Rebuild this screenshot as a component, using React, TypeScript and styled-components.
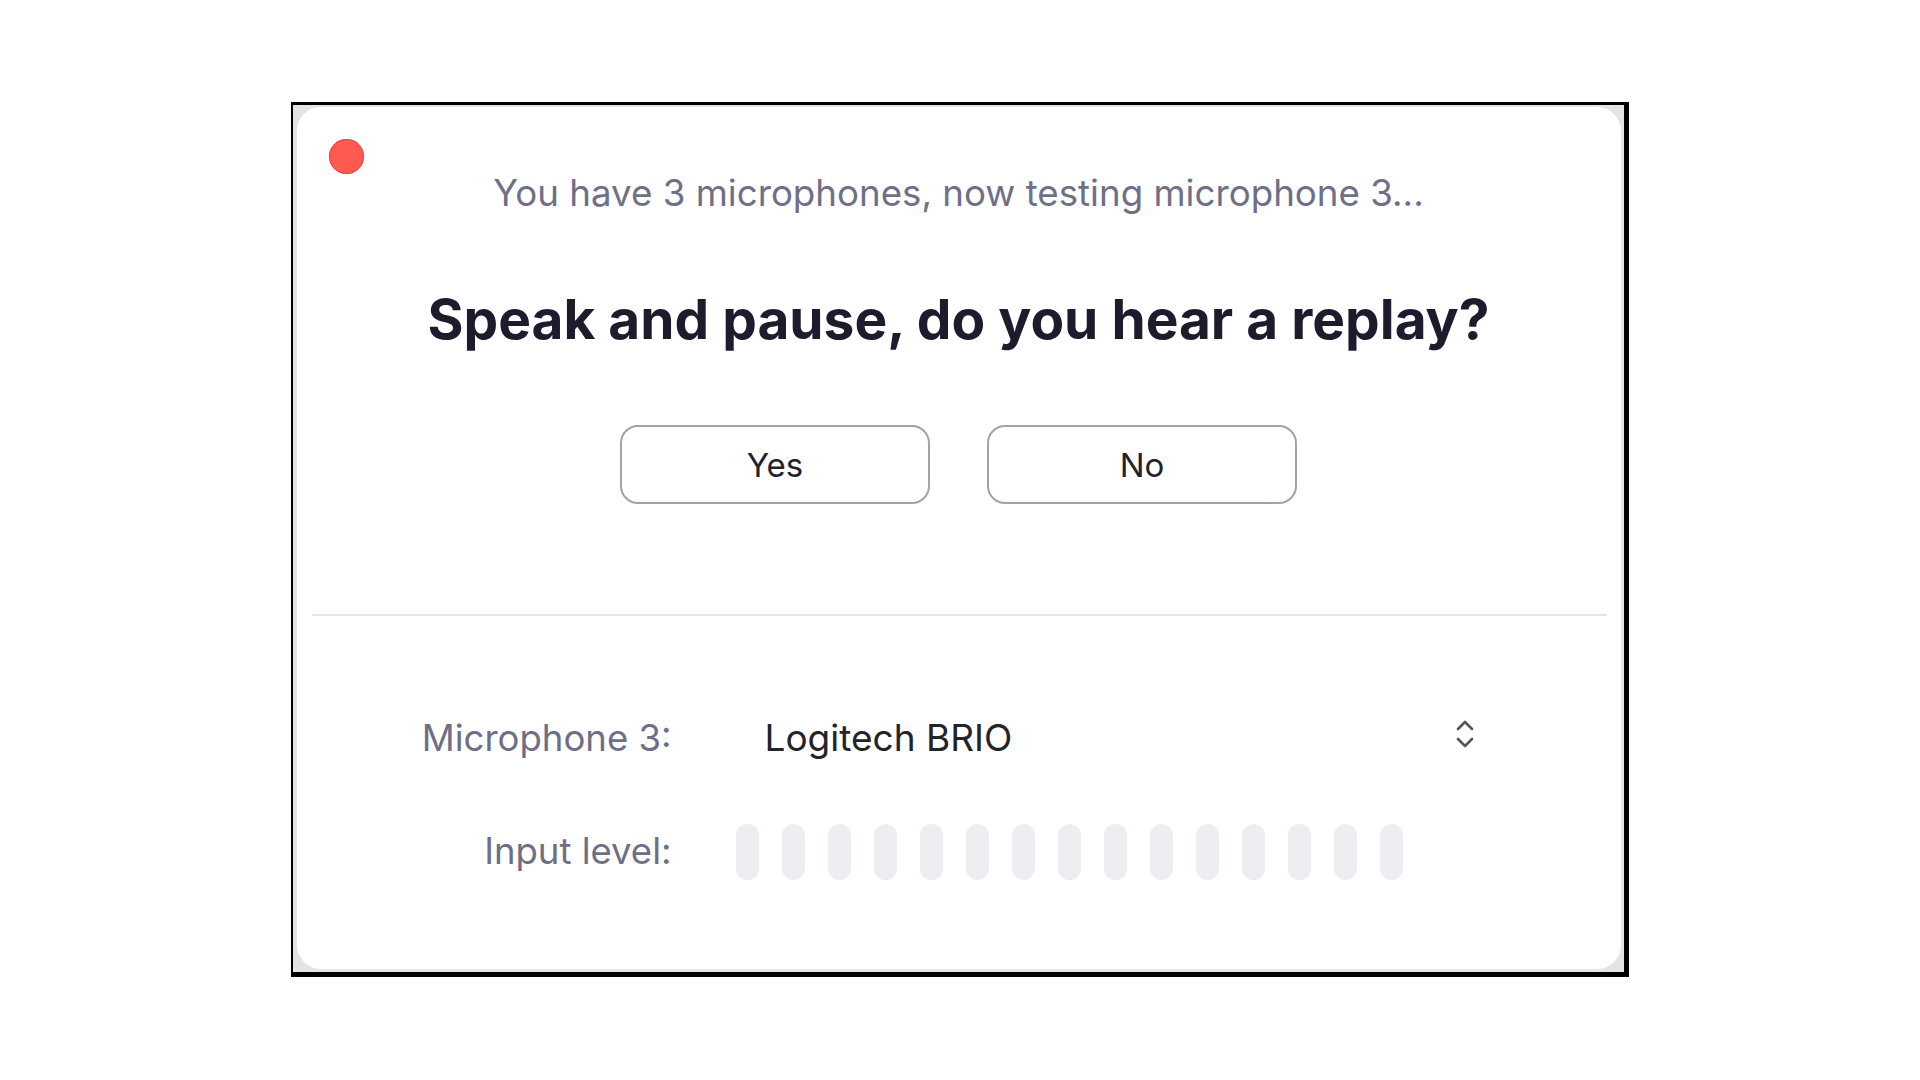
import React from "react";
import styled, { createGlobalStyle } from "styled-components";

const GlobalStyle = createGlobalStyle`
  html, body { margin: 0; padding: 0; background: #ffffff; }
  body { font-family: Inter, "Noto Sans", "Liberation Sans", sans-serif; }
  #root { min-height: 100vh; }
`;

const Page = styled.div`
  width: 1920px;
  height: 1080px;
  display: flex;
  align-items: flex-start;
  justify-content: center;
  padding-top: 102px;
  box-sizing: border-box;
`;

const Frame = styled.div`
  width: 1338px;
  height: 875px;
  box-sizing: border-box;
  border-style: solid;
  border-color: #000;
  border-width: 3px 5px 5px 2px;
  background: #e4e4e6;
  padding: 2px 3px 3px 4px;
  display: flex;
  margin-left: -1px;
`;

const Panel = styled.div`
  position: relative;
  flex: 1;
  background: #ffffff;
  border-radius: 24px;
  display: flex;
  flex-direction: column;
  align-items: center;
  padding-top: 64px;
  box-sizing: border-box;
`;

const CloseDot = styled.span`
  position: absolute;
  left: 32px;
  top: 32px;
  width: 35px;
  height: 35px;
  border-radius: 50%;
  background: #ff5a51;
  box-shadow: inset 0 0 0 1px #ee463e;
`;

const Subtitle = styled.div`
  font-size: 36.7px;
  line-height: 44px;
  color: #6f6f87;
  font-weight: 400;
`;

const Title = styled.h1`
  margin: 72px 0 0;
  font-size: 55px;
  line-height: 64px;
  font-weight: 700;
  color: #1c1c2c;
  letter-spacing: 0;
`;

const ButtonRow = styled.div`
  display: flex;
  gap: 57px;
  margin-top: 74px;
`;

const Button = styled.button`
  width: 310px;
  height: 79px;
  box-sizing: border-box;
  border: 2px solid #a2a2ab;
  border-radius: 18px;
  background: #ffffff;
  font-family: Inter, "Noto Sans", "Liberation Sans", sans-serif;
  font-size: 33px;
  color: #22222f;
  font-weight: 400;
  cursor: pointer;
`;

const Divider = styled.hr`
  align-self: stretch;
  margin: 110px 14px 0 15px;
  border: none;
  height: 2px;
  background: #e6e6e9;
`;

const Settings = styled.div`
  align-self: stretch;
  display: grid;
  grid-template-columns: 375px 1fr;
  column-gap: 64px;
  row-gap: 61px;
  align-items: center;
  margin-top: 100px;
`;

const Label = styled.div`
  text-align: right;
  font-size: 36.5px;
  line-height: 44px;
  color: #6e6e86;
`;

const Select = styled.div`
  width: 740px;
  display: flex;
  align-items: center;
  justify-content: space-between;
  padding-left: 29px;
  box-sizing: border-box;
`;

const SelectValue = styled.span`
  font-size: 37px;
  line-height: 44px;
  color: #232328;
`;

const Chevrons = styled.svg`
  width: 22px;
  height: 32px;
  margin-top: -8px;
`;

const Meter = styled.div`
  display: flex;
  gap: 23px;
  margin-top: 3px;
`;

const MeterBar = styled.span<{ $on?: boolean }>`
  width: 23px;
  height: 56px;
  border-radius: 12px;
  background: ${(p) => (p.$on ? "#3ac163" : "#eceef1")};
`;

export default function App() {
  const bars = Array.from({ length: 15 }, (_, i) => i);
  return (
    <>
      <GlobalStyle />
      <Page>
        <Frame>
          <Panel>
            <CloseDot />
            <Subtitle>You have 3 microphones, now testing microphone 3...</Subtitle>
            <Title>Speak and pause, do you hear a replay?</Title>
            <ButtonRow>
              <Button>Yes</Button>
              <Button>No</Button>
            </ButtonRow>
            <Divider />
            <Settings>
              <Label>Microphone 3:</Label>
              <Select>
                <SelectValue>Logitech BRIO</SelectValue>
                <Chevrons viewBox="0 0 22 32" fill="none">
                  <path d="M4 11 L11 4 L18 11" stroke="#555559" strokeWidth="2.6" strokeLinecap="round" strokeLinejoin="round" />
                  <path d="M4 21 L11 28 L18 21" stroke="#555559" strokeWidth="2.6" strokeLinecap="round" strokeLinejoin="round" />
                </Chevrons>
              </Select>
              <Label>Input level:</Label>
              <Meter>
                {bars.map((i) => (
                  <MeterBar key={i} />
                ))}
              </Meter>
            </Settings>
          </Panel>
        </Frame>
      </Page>
    </>
  );
}
